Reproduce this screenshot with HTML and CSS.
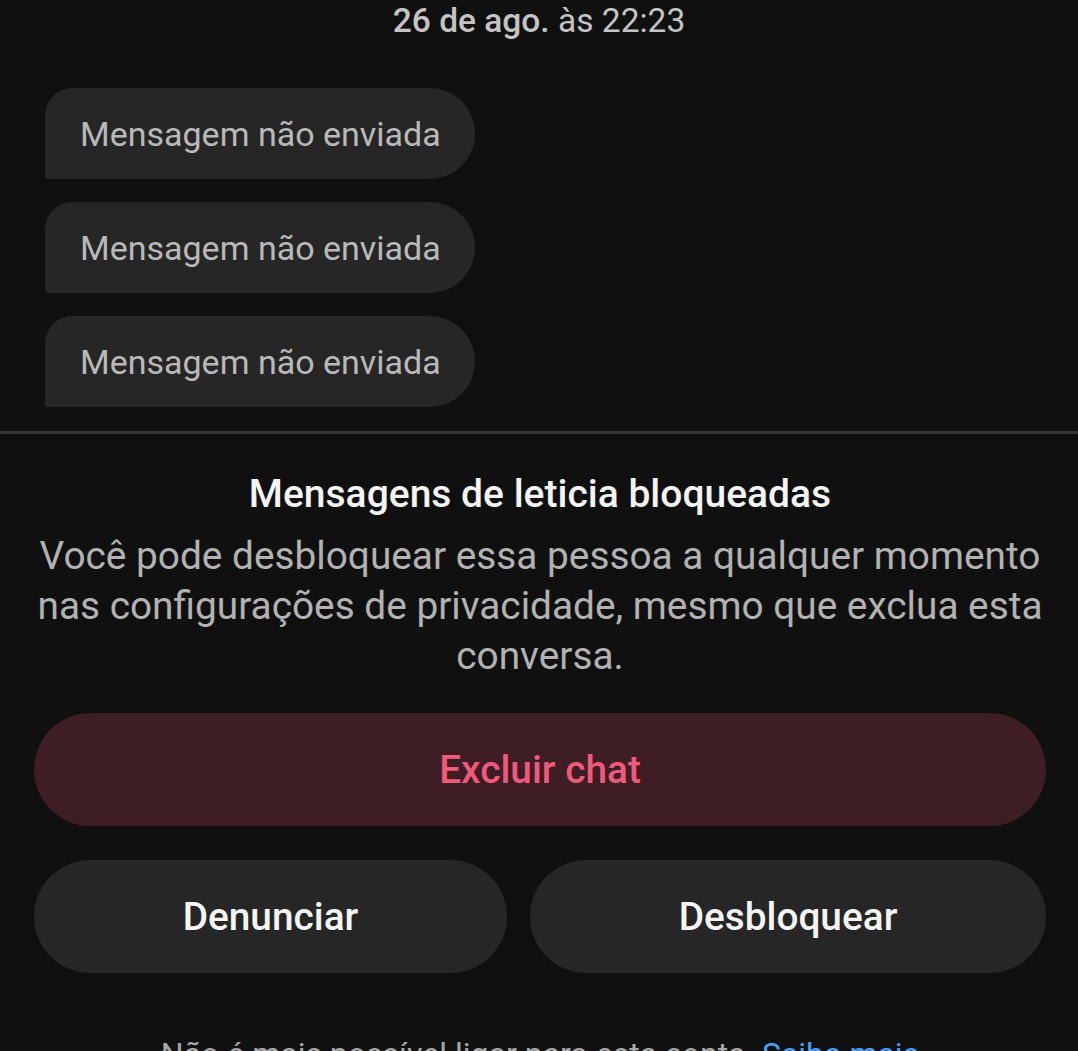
FILE: index.html
```html
<!DOCTYPE html>
<html lang="pt-BR">
<head>
<meta charset="utf-8">
<title>Mensagens bloqueadas</title>
<link rel="stylesheet" href="styles.css">
</head>
<body>
<div class="screen">
  <div class="timestamp"><span class="ts-date">26 de ago.</span> às 22:23</div>
  <div class="thread">
    <div class="bubble">Mensagem não enviada</div>
    <div class="bubble">Mensagem não enviada</div>
    <div class="bubble">Mensagem não enviada</div>
  </div>
  <div class="divider"></div>
  <section class="blocked">
    <h1 class="blocked-title">Mensagens de leticia bloqueadas</h1>
    <p class="blocked-desc">Você pode desbloquear essa pessoa a qualquer momento nas configurações de privacidade, mesmo que exclua esta conversa.</p>
    <button class="btn btn-danger">Excluir chat</button>
    <div class="btn-row">
      <button class="btn">Denunciar</button>
      <button class="btn">Desbloquear</button>
    </div>
    <p class="footnote">Não é mais possível ligar para esta conta. <span class="link">Saiba mais</span></p>
  </section>
</div>
</body>
</html>
```

FILE: styles.css
```css
html, body {
  margin: 0;
  padding: 0;
  background: #101010;
  overflow: hidden;
}
body {
  font-family: Roboto, "Noto Sans", "Liberation Sans", sans-serif;
  color: #f2f2f2;
}
.screen {
  width: 1078px;
  height: 1051px;
  overflow: hidden;
}
.timestamp {
  text-align: center;
  font-size: 33.5px;
  line-height: 42px;
  color: #c4c4c4;
}
.ts-date {
  font-weight: 500;
}
.thread {
  margin-top: 46px;
  padding-left: 45px;
  display: flex;
  flex-direction: column;
  align-items: flex-start;
  gap: 23px;
}
.bubble {
  height: 91px;
  box-sizing: border-box;
  display: flex;
  align-items: center;
  padding: 0 34px 0 35px;
  background: #262626;
  color: #b9b9b9;
  font-size: 34px;
  border-radius: 28px 46px 46px 3px;
}
.divider {
  margin-top: 24px;
  height: 3px;
  background: #353535;
}
.blocked {
  padding: 0 32px 0 34px;
  display: flex;
  flex-direction: column;
  text-align: center;
}
.blocked-title {
  margin: 35px 0 0;
  font-size: 39px;
  line-height: 50px;
  font-weight: 500;
  color: #f4f4f4;
}
.blocked-desc {
  margin: 12px -2px 0;
  font-size: 38.8px;
  line-height: 50px;
  color: #b2b2b2;
}
.btn {
  height: 113px;
  border: 0;
  border-radius: 57px;
  background: #262626;
  color: #f5f5f5;
  font-family: inherit;
  font-size: 38.8px;
  font-weight: 500;
  padding: 0 40px;
}
.btn-danger {
  margin-top: 32px;
  background: #3e1d24;
  color: #ef5a7c;
}
.btn-row {
  margin-top: 34px;
  display: flex;
  gap: 23px;
}
.btn-row .btn {
  flex: 1 1 auto;
}
.footnote {
  margin: 57px 0 0;
  font-size: 32px;
  line-height: 48px;
  color: #a8a8a8;
  white-space: nowrap;
}
.link {
  color: #4a9ff5;
}
```
